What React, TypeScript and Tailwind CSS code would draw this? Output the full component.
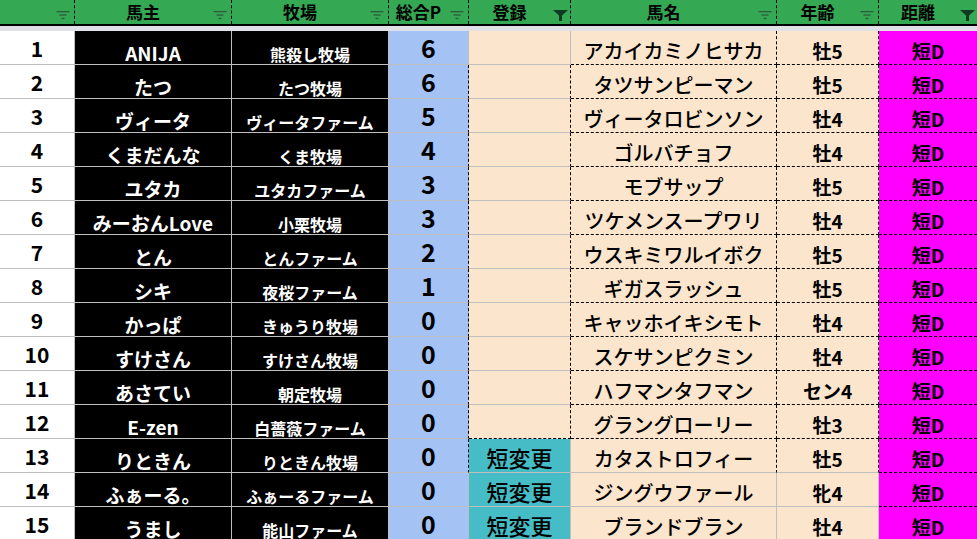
import React from "react";

type Row = {
  owner: string;
  farm: string;
  pts: number;
  reg: string;
  horse: string;
  age: string;
  dist: string;
};

const rows: Row[] = [
  { owner: "ANIJA", farm: "熊殺し牧場", pts: 6, reg: "", horse: "アカイカミノヒサカ", age: "牡5", dist: "短D" },
  { owner: "たつ", farm: "たつ牧場", pts: 6, reg: "", horse: "タツサンピーマン", age: "牡5", dist: "短D" },
  { owner: "ヴィータ", farm: "ヴィータファーム", pts: 5, reg: "", horse: "ヴィータロビンソン", age: "牡4", dist: "短D" },
  { owner: "くまだんな", farm: "くま牧場", pts: 4, reg: "", horse: "ゴルバチョフ", age: "牡4", dist: "短D" },
  { owner: "ユタカ", farm: "ユタカファーム", pts: 3, reg: "", horse: "モブサップ", age: "牡5", dist: "短D" },
  { owner: "みーおんLove", farm: "小栗牧場", pts: 3, reg: "", horse: "ツケメンスープワリ", age: "牡4", dist: "短D" },
  { owner: "とん", farm: "とんファーム", pts: 2, reg: "", horse: "ウスキミワルイボク", age: "牡5", dist: "短D" },
  { owner: "シキ", farm: "夜桜ファーム", pts: 1, reg: "", horse: "ギガスラッシュ", age: "牡5", dist: "短D" },
  { owner: "かっぱ", farm: "きゅうり牧場", pts: 0, reg: "", horse: "キャッホイキシモト", age: "牡4", dist: "短D" },
  { owner: "すけさん", farm: "すけさん牧場", pts: 0, reg: "", horse: "スケサンピクミン", age: "牡4", dist: "短D" },
  { owner: "あさてい", farm: "朝定牧場", pts: 0, reg: "", horse: "ハフマンタフマン", age: "セン4", dist: "短D" },
  { owner: "E-zen", farm: "白薔薇ファーム", pts: 0, reg: "", horse: "グラングローリー", age: "牡3", dist: "短D" },
  { owner: "りときん", farm: "りときん牧場", pts: 0, reg: "短変更", horse: "カタストロフィー", age: "牡5", dist: "短D" },
  { owner: "ふぁーる。", farm: "ふぁーるファーム", pts: 0, reg: "短変更", horse: "ジングウファール", age: "牝4", dist: "短D" },
  { owner: "うまし", farm: "能山ファーム", pts: 0, reg: "短変更", horse: "ブランドブラン", age: "牡4", dist: "短D" },
];

const FilterLines = () => (
  <svg width="14" height="9" viewBox="0 0 14 9" className="block">
    <rect x="0.5" y="0" width="13" height="1.3" fill="#2b5e3d" />
    <rect x="3.5" y="3.4" width="7" height="1.3" fill="#2b5e3d" />
    <rect x="5.5" y="6.8" width="3" height="1.3" fill="#2b5e3d" />
  </svg>
);

const FilterFunnel = () => (
  <svg width="15" height="11" viewBox="0 0 15 11" className="block">
    <path d="M0 0 H15 L9 5.5 V11 H6 V5.5 Z" fill="#103b22" />
  </svg>
);

const headers: { label: string; active?: boolean }[] = [
  { label: "" },
  { label: "馬主" },
  { label: "牧場" },
  { label: "総合P" },
  { label: "登録", active: true },
  { label: "馬名" },
  { label: "年齢" },
  { label: "距離", active: true },
];

const DOT_R = "border-r border-r-black [border-right-style:dashed]";
const GRAY_R = "border-r border-r-[#bfbfbf] [border-right-style:solid]";
const DOT_B = "border-b border-b-black [border-bottom-style:dashed]";
const GRAY_B = "border-b border-b-[#bfbfbf] [border-bottom-style:solid]";

function rightBorder(r: number, c: number): string {
  if (c === 7) return "";
  if (c === 3 && r >= 2 && r <= 13) return DOT_R;
  if (c === 4 && r >= 2 && r <= 12) return DOT_R;
  if ((c === 5 || c === 6) && r <= 13) return DOT_R;
  return GRAY_R;
}

function bottomBorder(r: number, c: number): string {
  if (c === 4 && r === 12) return DOT_B;
  if ((c === 5 || c === 6) && r <= 12) return DOT_B;
  if (c === 7 && r <= 14) return DOT_B;
  return GRAY_B;
}

export default function App() {
  return (
    <div
      className="w-[977px] h-[539px] overflow-hidden bg-white"
      style={{ fontFamily: '"Noto Sans CJK JP", "Noto Sans", sans-serif' }}
    >
      {/* header */}
      <div className="grid grid-cols-[75px_157px_157px_80px_102px_206px_102px_98px] h-[24px] bg-[#34a853]">
        {headers.map((h, i) => (
          <div
            key={i}
            className={`relative flex items-center h-[24px] ${i < 7 ? "border-r border-dashed border-r-black" : ""}`}
          >
            <div className="flex-1 text-center text-[17px] font-bold leading-none text-black pr-[20px] pb-[1px]">
              {h.label}
            </div>
            <div className={`absolute ${h.active ? "right-[2px] top-[10px]" : "right-[4px] top-[11px]"}`}>
              {h.active ? <FilterFunnel /> : <FilterLines />}
            </div>
          </div>
        ))}
      </div>
      <div className="h-[2px] bg-black" />
      <div className="h-[5px] bg-[#dfe1e6]" />

      {/* rows */}
      <div className="grid grid-cols-[75px_157px_157px_80px_102px_206px_102px_98px]">
        {rows.map((row, idx) => {
          const r = idx + 1;
          const cell = (c: number, extra: string, content: React.ReactNode) => (
            <div
              key={c}
              className={`h-[34px] flex items-center justify-center whitespace-nowrap leading-none ${rightBorder(r, c)} ${bottomBorder(r, c)} ${extra}`}
            >
              {content}
            </div>
          );
          return (
            <React.Fragment key={r}>
              {cell(0, "bg-white text-black text-[21px] font-bold pt-[1px]", r)}
              {cell(1, "bg-black text-white text-[19px] font-bold pt-[9px]", row.owner)}
              {cell(2, "bg-black text-white text-[16px] font-bold pt-[12px]", row.farm)}
              {cell(3, "bg-[#a4c2f4] text-black text-[25px] font-bold pb-[1px]", row.pts)}
              {cell(
                4,
                row.reg ? "bg-[#46bdc6] text-black text-[22px] font-medium pt-[3px]" : "bg-[#fce5cd]",
                row.reg
              )}
              {cell(5, "bg-[#fce5cd] text-black text-[20px] font-medium pt-[6px]", row.horse)}
              {cell(6, "bg-[#fce5cd] text-black text-[19px] font-bold pt-[6px]", row.age)}
              {cell(7, "bg-[#ff00ff] text-black text-[19px] font-bold pt-[6px]", row.dist)}
            </React.Fragment>
          );
        })}
      </div>
    </div>
  );
}
